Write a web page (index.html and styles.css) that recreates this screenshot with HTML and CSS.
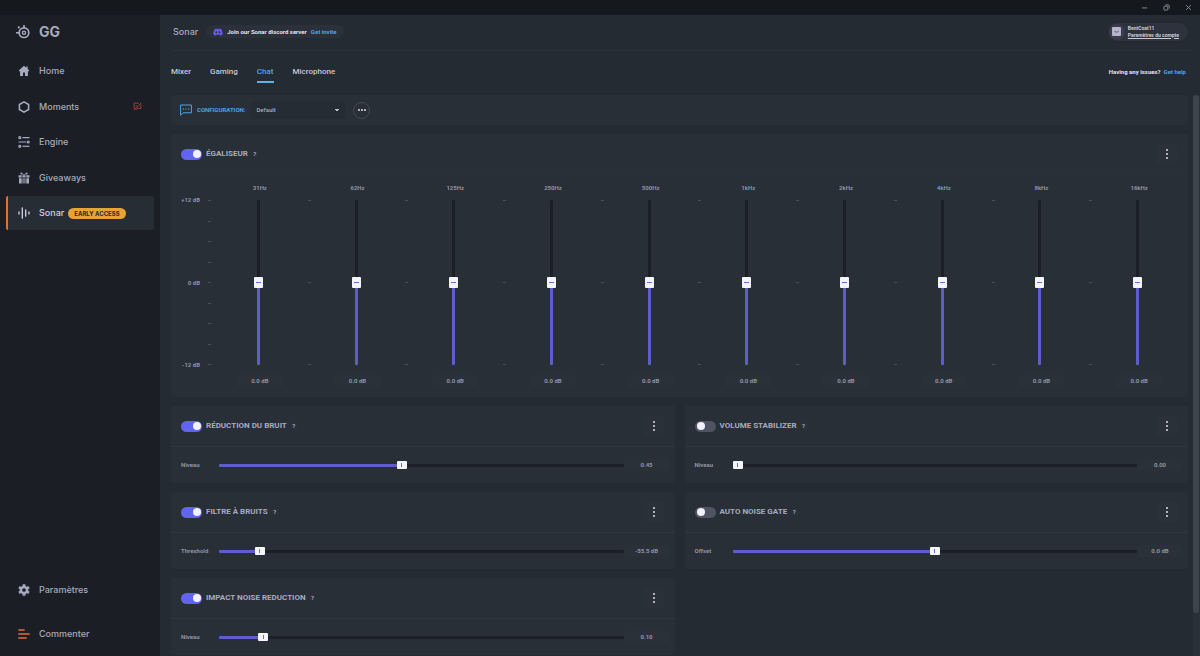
FILE: index.html
```html
<!DOCTYPE html>
<html lang="fr">
<head>
<meta charset="utf-8">
<meta name="viewport" content="width=device-width, initial-scale=1">
<title>GG – Sonar</title>
<link rel="stylesheet" href="styles.css">
</head>
<body>
<div class="app">
  <div class="titlebar">
    <button class="win-btn" aria-label="Minimize"><svg viewBox="0 0 8 8"><path d="M1 4.500h6"/></svg></button>
    <button class="win-btn" aria-label="Restore"><svg viewBox="0 0 8 8"><rect x="1" y="2.500" width="4.500" height="4.500" rx="1"/><path d="M2.700 1h3.300a1 1 0 0 1 1 1v3.300"/></svg></button>
    <button class="win-btn" aria-label="Close"><svg viewBox="0 0 8 8"><path d="M1.300 1.300l5.400 5.400M6.700 1.300l-5.400 5.400"/></svg></button>
  </div>

  <aside class="sidebar">
    <div class="brand">
      <svg class="brand-logo" viewBox="0 0 14 14"><circle cx="8" cy="7.700" r="4.800" fill="none" stroke="currentColor" stroke-width="1.700"/><circle cx="8" cy="7.700" r="1.600" fill="none" stroke="currentColor" stroke-width="1.400"/><path d="M7.200 0h1.600v3H7.200zM0 6.900h3.500v1.600H0z" fill="currentColor"/><circle cx="2.800" cy="2.400" r="1.100" fill="currentColor"/></svg>
      <span>GG</span>
    </div>
    <nav class="nav nav-top">
      <a class="nav-item" href="#home"><svg viewBox="0 0 12 12"><path fill="currentColor" d="M6 .8L.7 5.600l.7.8.7-.5v5h2.900V7.500h2v3.400h2.900v-5l.7.5.7-.8-1.600-1.500V1.600H8.200v1.200z"/></svg><span>Home</span></a>
      <a class="nav-item" href="#moments"><svg viewBox="0 0 12 12"><path fill="none" stroke="currentColor" stroke-width="1.600" d="M6 .9l4.600 2.600v5L6 11.100 1.400 8.500v-5z"/></svg><span>Moments</span>
        <svg class="nav-alert" viewBox="0 0 10 10"><path d="M6.500 1.300H1.200v5.800h1.300M4.500 7.100h4.300V2.500M3 9l1.500-1.900M1.200 9.200L9.200.8M3.500 3.500v1.700"/></svg></a>
      <a class="nav-item" href="#engine"><svg viewBox="0 0 12 12"><g fill="none" stroke="currentColor" stroke-width="1.200"><circle cx="1.800" cy="1.700" r="1"/><path d="M4.500 1.700h7M.5 6H8"/><circle cx="10.200" cy="6" r="1"/><circle cx="1.800" cy="10.300" r="1"/><path d="M4.500 10.300h7"/></g></svg><span>Engine</span></a>
      <a class="nav-item" href="#giveaways"><svg viewBox="0 0 12 12"><path fill="currentColor" d="M.5 3.300h3.200v2.200H.5zM4.500 3.300h3v2.200h-3zM8.300 3.300h3.200v2.200H8.300zM1 6.300h2.700v5.200H1zM4.500 6.300h1.100v5.200H4.500zM6.400 6.300h1.100v5.200H6.400zM8.300 6.300H11v5.200H8.300z"/><circle cx="3.400" cy="1.500" r="1" fill="currentColor"/><circle cx="8.600" cy="1.500" r="1" fill="currentColor"/><path d="M4.200 1.800L6 3.200l1.800-1.400" fill="none" stroke="currentColor" stroke-width=".9"/></svg><span>Giveaways</span></a>
      <a class="nav-item is-active" href="#sonar" aria-current="page"><svg viewBox="0 0 12 12"><path fill="none" stroke="currentColor" stroke-width="1.300" stroke-linecap="round" d="M1 5v2M4.300 .8v10.400M7.700 2.800v6.400M11 5v2"/></svg><span>Sonar</span><span class="tag">EARLY ACCESS</span></a>
    </nav>
    <nav class="nav nav-bottom">
      <a class="nav-item" href="#settings"><svg viewBox="0 0 12 12"><circle cx="6" cy="6" r="3.100" fill="none" stroke="currentColor" stroke-width="2.500"/><path stroke="currentColor" stroke-width="2.800" d="M6 .2v2M6 9.800v2M1 3.100l1.700 1M9.300 7.900l1.700 1M1 8.900l1.700-1M9.300 4.100l1.700-1"/></svg><span>Paramètres</span></a>
      <a class="nav-item" href="#feedback"><svg class="feedback" viewBox="0 0 12 12"><path fill="none" stroke="currentColor" stroke-width="1.700" stroke-linecap="round" d="M1 2h5M1 6h10M1 10h7"/></svg><span>Commenter</span></a>
    </nav>
  </aside>

  <main class="main">
    <header class="header">
      <h1>Sonar</h1>
      <div class="pill">
        <svg class="discord" viewBox="0 0 11 8"><path fill="#625cf0" fill-rule="evenodd" d="M3.800.2L2 .8C1 2.400.4 4.500.4 6.700c.8.700 1.700 1 2.600 1.200l.6-1c1.200.3 2.600.3 3.800 0l.6 1c.9-.2 1.800-.5 2.600-1.200C10.600 4.500 10 2.400 9 .8L7.200.2l-.4.7a8 8 0 0 0-2.600 0zM3.800 3.200a1 1.100 0 1 0 0 2.200 1 1.100 0 0 0 0-2.200zm3.400 0a1 1.100 0 1 0 0 2.200 1 1.100 0 0 0 0-2.200z"/></svg>
        <span>Join our Sonar discord server</span><a href="#invite">Get invite</a>
      </div>
      <div class="account">
        <span class="avatar"><svg viewBox="0 0 9 9"><rect width="9" height="9" rx="1" fill="#b4b5cb"/><path d="M2.500 4.300q2 2 4 0" fill="none" stroke="#55576b"/></svg></span>
        <div><span>BentCoat11</span><a href="#account">Paramètres du compte</a></div>
      </div>
    </header>

    <div class="tabs-row">
      <nav class="tabs">
        <a href="#mixer">Mixer</a><a href="#gaming">Gaming</a><a class="is-active" href="#chat" aria-current="page">Chat</a><a href="#microphone">Microphone</a>
      </nav>
      <p class="help"><span>Having any issues?</span><a href="#help">Get help</a></p>
    </div>

    <div class="viewport">
      <div class="content">
        <section class="card config">
          <svg class="chat-icon" viewBox="0 0 12 12"><path fill="none" stroke="currentColor" d="M.6 11.300V1h10.800v7.800H3z"/><path fill="currentColor" d="M2.600 4.400h1.400v1.200H2.600zM5.300 4.400h1.400v1.200H5.300zM8 4.400h1.400v1.200H8z"/></svg>
          <label for="config">CONFIGURATION:</label>
          <select id="config"><option>Default</option></select>
          <button class="round-btn" aria-label="Options"><i></i><i></i><i></i></button>
        </section>

        <section class="card eq">
          <div class="card-head">
            <label><input class="switch" type="checkbox" checked><span>ÉGALISEUR</span></label><button class="hint" aria-label="Aide">?</button>
            <button class="menu" aria-label="Menu"><i></i><i></i><i></i></button>
          </div>
          <div class="eq-body">
            <div class="axis"><span>+12 dB</span><span>0 dB</span><span>-12 dB</span></div>
            <div class="ticks"><i></i><i></i><i></i><i></i><i></i><i></i><i></i><i></i><i></i></div>
            <div class="bands" id="bands"></div>
          </div>
        </section>

        <div class="effects" id="effects"></div>
      </div>
      <div class="scrollbar" aria-hidden="true"><div class="scroll-thumb" id="thumb"></div></div>
    </div>
  </main>
</div>
<script src="app.js"></script>
</body>
</html>
```
FILE: app.js
```javascript
const bands = ['31Hz', '62Hz', '125Hz', '250Hz', '500Hz', '1kHz', '2kHz', '4kHz', '8kHz', '16kHz'];
const effects = [
  { title: 'RÉDUCTION DU BRUIT', on: true, label: 'Niveau', pos: 45, value: '0.45' },
  { title: 'VOLUME STABILIZER', on: false, label: 'Niveau', pos: 0, value: '0.00' },
  { title: 'FILTRE À BRUITS', on: true, label: 'Threshold', pos: 9, value: '-55.5 dB' },
  { title: 'AUTO NOISE GATE', on: false, label: 'Offset', pos: 50, value: '0.0 dB' },
  { title: 'IMPACT NOISE REDUCTION', on: true, label: 'Niveau', pos: 10, value: '0.10' }
];

document.getElementById('bands').innerHTML = bands.map((name, i) => `
  <div class="band">
    <label for="band${i}">${name}</label>
    <div class="band-track">
      <input class="fader" id="band${i}" type="range" min="-12" max="12" value="0" style="--fill:50%">
      <div class="ticks"><i></i><i></i><i></i></div>
    </div>
    <output class="value" for="band${i}">0.0 dB</output>
  </div>`).join('');

document.getElementById('effects').innerHTML = effects.map((e, i) => `
  <section class="card">
    <div class="card-head">
      <label><input class="switch" type="checkbox" ${e.on ? 'checked' : ''}><span>${e.title}</span></label><button class="hint" aria-label="Aide">?</button>
      <button class="menu" aria-label="Menu"><i></i><i></i><i></i></button>
    </div>
    <div class="param">
      <label for="fx${i}">${e.label}</label>
      <input class="slider" id="fx${i}" type="range" min="0" max="100" value="${e.pos}" style="--fill:${e.pos}%">
      <output class="value" for="fx${i}">${e.value}</output>
    </div>
  </section>`).join('');

document.querySelectorAll('input[type=range]').forEach((el) => {
  el.addEventListener('input', () => {
    const share = (el.value - el.min) / (el.max - el.min);
    el.style.setProperty('--fill', `${share * 100}%`);
  });
});

const content = document.querySelector('.content');
const thumb = document.getElementById('thumb');
function syncThumb() {
  thumb.style.height = `${content.clientHeight / content.scrollHeight * 100}%`;
  thumb.style.marginTop = `${content.scrollTop / content.scrollHeight * content.clientHeight}px`;
}
content.addEventListener('scroll', syncThumb);
window.addEventListener('resize', syncThumb);
syncThumb();
```
FILE: styles.css
```css
:root {
  --bar: #15191d;
  --side: #1b1e24;
  --main: #242b32;
  --card: #282f37;
  --raised: #2b313b;
  --track: #1b1f27;
  --accent: #6164ee;
  --fill-color: #5e5dcb;
  --text: #a8aabf;
  --muted: #9093a4;
  --link: #4ea3ea;
}
* { box-sizing: border-box; }
body {
  margin: 0;
  background: var(--main);
  color: var(--text);
  font: 500 9px/12px Inter, "Liberation Sans", sans-serif;
}
a { color: inherit; text-decoration: none; }
button { border: 0; padding: 0; background: none; color: inherit; font: inherit; }
svg { display: block; flex: none; }

.app {
  display: grid;
  grid-template: 15px minmax(0, 1fr) / 160px minmax(0, 1fr);
  height: 100vh;
}
.titlebar {
  grid-column: 1 / -1;
  display: flex;
  justify-content: flex-end;
  align-items: center;
  gap: 15px;
  padding-right: 8px;
  background: var(--bar);
}
.win-btn svg { width: 7px; height: 7px; fill: none; stroke: #92959b; }

.sidebar {
  display: flex;
  flex-direction: column;
  padding: 9px 6px 5px;
  background: var(--side);
}
.brand {
  display: flex;
  align-items: center;
  gap: 9px;
  height: 16px;
  padding-left: 10px;
  font-size: 14px;
  font-weight: 700;
}
.brand-logo { width: 14px; height: 14px; }
.nav { display: flex; flex-direction: column; justify-content: space-between; }
.nav-top { height: 176px; margin-top: 14px; }
.nav-item {
  display: flex;
  align-items: center;
  height: 34px;
  padding-left: 10px;
  border-left: 2px solid transparent;
  border-radius: 2px;
}
.nav-item > svg:first-child { width: 12px; height: 12px; margin-right: 9px; }
.nav-item .nav-alert {
  width: 9px;
  height: 9px;
  margin: 0 12px 0 auto;
  fill: none;
  stroke: #a8423f;
}
.nav-item.is-active { background: #262d35; border-left-color: #e46f35; color: #d0d2e6; }
.tag {
  margin-left: 4px;
  padding: 0 6px;
  border-radius: 6px;
  background: #e5a535;
  color: #2b2a28;
  font-size: 6px;
  font-weight: 700;
  line-height: 11px;
}
.nav-bottom { gap: 10px; margin-top: auto; }
.feedback { color: #e0703a; }

.main {
  display: flex;
  flex-direction: column;
  min-width: 0;
  padding-left: 11px;
  background: var(--main);
  font-family: Roboto, "Liberation Sans", sans-serif;
}
.header {
  display: flex;
  align-items: center;
  height: 36px;
  margin-right: 8px;
  padding: 0 4px 2px 2px;
  border-bottom: 1px solid #2a3138;
}
h1 { margin: 0; font: 500 9px/12px Inter, "Liberation Sans", sans-serif; }
.pill {
  display: flex;
  align-items: center;
  gap: 4px;
  height: 13px;
  margin-left: 8px;
  padding: 0 7px;
  border-radius: 7px;
  background: #2b303a;
  color: #e2e3f2;
  font-size: 6px;
  font-weight: 700;
}
.pill a, .help a { color: var(--link); }
.discord { width: 10px; height: 8px; }
.account {
  display: flex;
  align-items: center;
  gap: 3px;
  height: 18px;
  margin-left: auto;
  padding: 0 9px 0 1px;
  border-radius: 9px;
  background: #2e323d;
  color: #c8c9dd;
  font-size: 5px;
  font-weight: 700;
  line-height: 7px;
}
.account div { display: flex; flex-direction: column; }
.account a { text-decoration: underline; }
.avatar {
  display: grid;
  place-items: center;
  width: 16px;
  height: 16px;
  border-radius: 50%;
  background: #3a3c4c;
}
.avatar svg { width: 9px; height: 9px; }

.tabs-row {
  display: flex;
  justify-content: space-between;
  align-items: flex-start;
  height: 44px;
  padding: 15px 14px 0 0;
}
.tabs { display: flex; gap: 19px; color: #c5c7dc; font-size: 8px; }
.tabs a { padding-bottom: 3px; border-bottom: 2px solid transparent; }
.tabs .is-active { color: var(--link); border-color: #5db2ea; }
.help { display: flex; gap: 3px; margin: 0; color: #e2e3f2; font-size: 6px; font-weight: 700; }

.viewport { display: flex; flex: 1; min-height: 0; }
.content {
  display: flex;
  flex: 1;
  flex-direction: column;
  gap: 9px;
  min-width: 0;
  padding: 0 5px 48px 0;
  overflow-y: scroll;
  scrollbar-width: none;
}
.scrollbar { width: 7px; padding-right: 1px; background: #2a3037; }
.scroll-thumb { border-radius: 3px; background: #3d444c; }

.card { flex: none; border-radius: 2px; background: var(--card); }
.config {
  display: flex;
  align-items: center;
  height: 30px;
  padding: 0 9px;
  color: var(--link);
}
.chat-icon { width: 12px; height: 12px; margin-right: 5px; }
.config label { font-size: 6px; font-weight: 700; }
.config select {
  width: 94px;
  height: 17px;
  margin: 0 8px 0 6px;
  padding: 0 5px;
  border: 0;
  border-radius: 2px;
  appearance: none;
  background: #262c33;
  background-image: linear-gradient(to bottom left, #c0c2d2 50%, transparent 51%), linear-gradient(to bottom right, #c0c2d2 50%, transparent 51%);
  background-size: 2px 3px;
  background-position: right 8px center, right 6px center;
  background-repeat: no-repeat;
  color: var(--text);
  font: 500 6px/12px Roboto, "Liberation Sans", sans-serif;
}
.round-btn {
  display: flex;
  justify-content: center;
  align-items: center;
  gap: 1px;
  width: 17px;
  height: 17px;
  border: 1px solid #454b56;
  border-radius: 50%;
}
.round-btn i, .menu i { width: 2px; height: 2px; border-radius: 50%; background: #dcdded; }

.card-head {
  display: flex;
  align-items: center;
  height: 41px;
  padding: 0 11px 0 10px;
  border-bottom: 1px solid #2e363e;
}
.card-head label { display: flex; align-items: center; gap: 4px; font-size: 8px; font-weight: 700; }
.hint {
  width: 8px;
  height: 8px;
  margin-left: 3px;
  border-radius: 50%;
  background: var(--raised);
  font-size: 6px;
  font-weight: 700;
  line-height: 8px;
}
.menu {
  display: flex;
  flex-direction: column;
  justify-content: center;
  align-items: center;
  gap: 2px;
  width: 20px;
  height: 20px;
  margin-left: auto;
  border-radius: 2px;
  background: #2a3139;
}
.switch {
  appearance: none;
  width: 21px;
  height: 11px;
  margin: 0;
  padding: 2px;
  border-radius: 6px;
  background: #505362;
}
.switch::before {
  content: "";
  display: block;
  width: 8px;
  height: 8px;
  margin-top: -1px;
  border-radius: 50%;
  background: #f1f1fd;
}
.switch:checked { padding-right: 1px; background: var(--accent); }
.switch:checked::before { margin-left: auto; }

.value {
  width: 46px;
  border-radius: 2px;
  background: #2a3139;
  color: var(--muted);
  font-size: 6px;
  font-weight: 700;
  text-align: center;
}

.eq .card-head { border-color: #2a3138; }
.eq-body {
  display: grid;
  grid-template-columns: 29px 11px minmax(0, 1fr);
  padding: 7px 0 10px;
  color: var(--muted);
  font-size: 6px;
  font-weight: 700;
}
.axis, .ticks { display: flex; flex-direction: column; justify-content: space-between; }
.axis { height: 177px; margin-top: 12px; text-align: right; }
.ticks { align-items: flex-end; }
.ticks i { width: 3px; height: 1px; background: #48515b; }
.eq-body > .ticks { height: 165px; margin-top: 18px; }
.bands { display: grid; grid-template-columns: repeat(10, minmax(0, 1fr)); }
.band { display: flex; flex-direction: column; align-items: center; gap: 6px; }
.band .value { margin-top: 4px; }
.band-track {
  display: grid;
  grid-template-columns: 3px 1fr 3px;
  width: 100%;
  height: 165px;
}
.band-track .ticks { grid-column: 3; margin-right: -2px; }
.band:last-child .ticks { visibility: hidden; }
.fader, .slider { appearance: none; margin: 0; background: none; }
.fader {
  grid-area: 1 / 2;
  justify-self: center;
  width: 9px;
  height: 165px;
  margin-right: 3px;
  writing-mode: vertical-lr;
  direction: rtl;
}
.fader::-webkit-slider-runnable-track {
  width: 3px;
  height: 100%;
  border-radius: 1px;
  background: linear-gradient(to top, var(--fill-color) var(--fill), var(--track) var(--fill));
}
.fader::-webkit-slider-thumb {
  appearance: none;
  width: 9px;
  height: 11px;
  margin-left: -3px;
  border-radius: 1px;
  background: linear-gradient(#6b6bd0, #6b6bd0) center / 5px 1px no-repeat #f4f4fd;
}

.effects {
  display: grid;
  grid-template-columns: repeat(2, minmax(0, 1fr));
  gap: 9px 10px;
}
.param {
  display: flex;
  align-items: center;
  height: 36px;
  padding: 0 5px 0 10px;
  font-size: 6px;
}
.param label { width: 38px; color: var(--muted); font-weight: 700; }
.slider { flex: 1; min-width: 0; height: 8px; }
.slider::-webkit-slider-runnable-track {
  height: 3px;
  border-radius: 1px;
  background: linear-gradient(to right, var(--fill-color) var(--fill), var(--track) var(--fill));
}
.slider::-webkit-slider-thumb {
  appearance: none;
  width: 10px;
  height: 8px;
  margin-top: -3px;
  border-radius: 1px;
  background: linear-gradient(#6b6bd0, #6b6bd0) center / 1px 4px no-repeat #f4f4fd;
}
```
